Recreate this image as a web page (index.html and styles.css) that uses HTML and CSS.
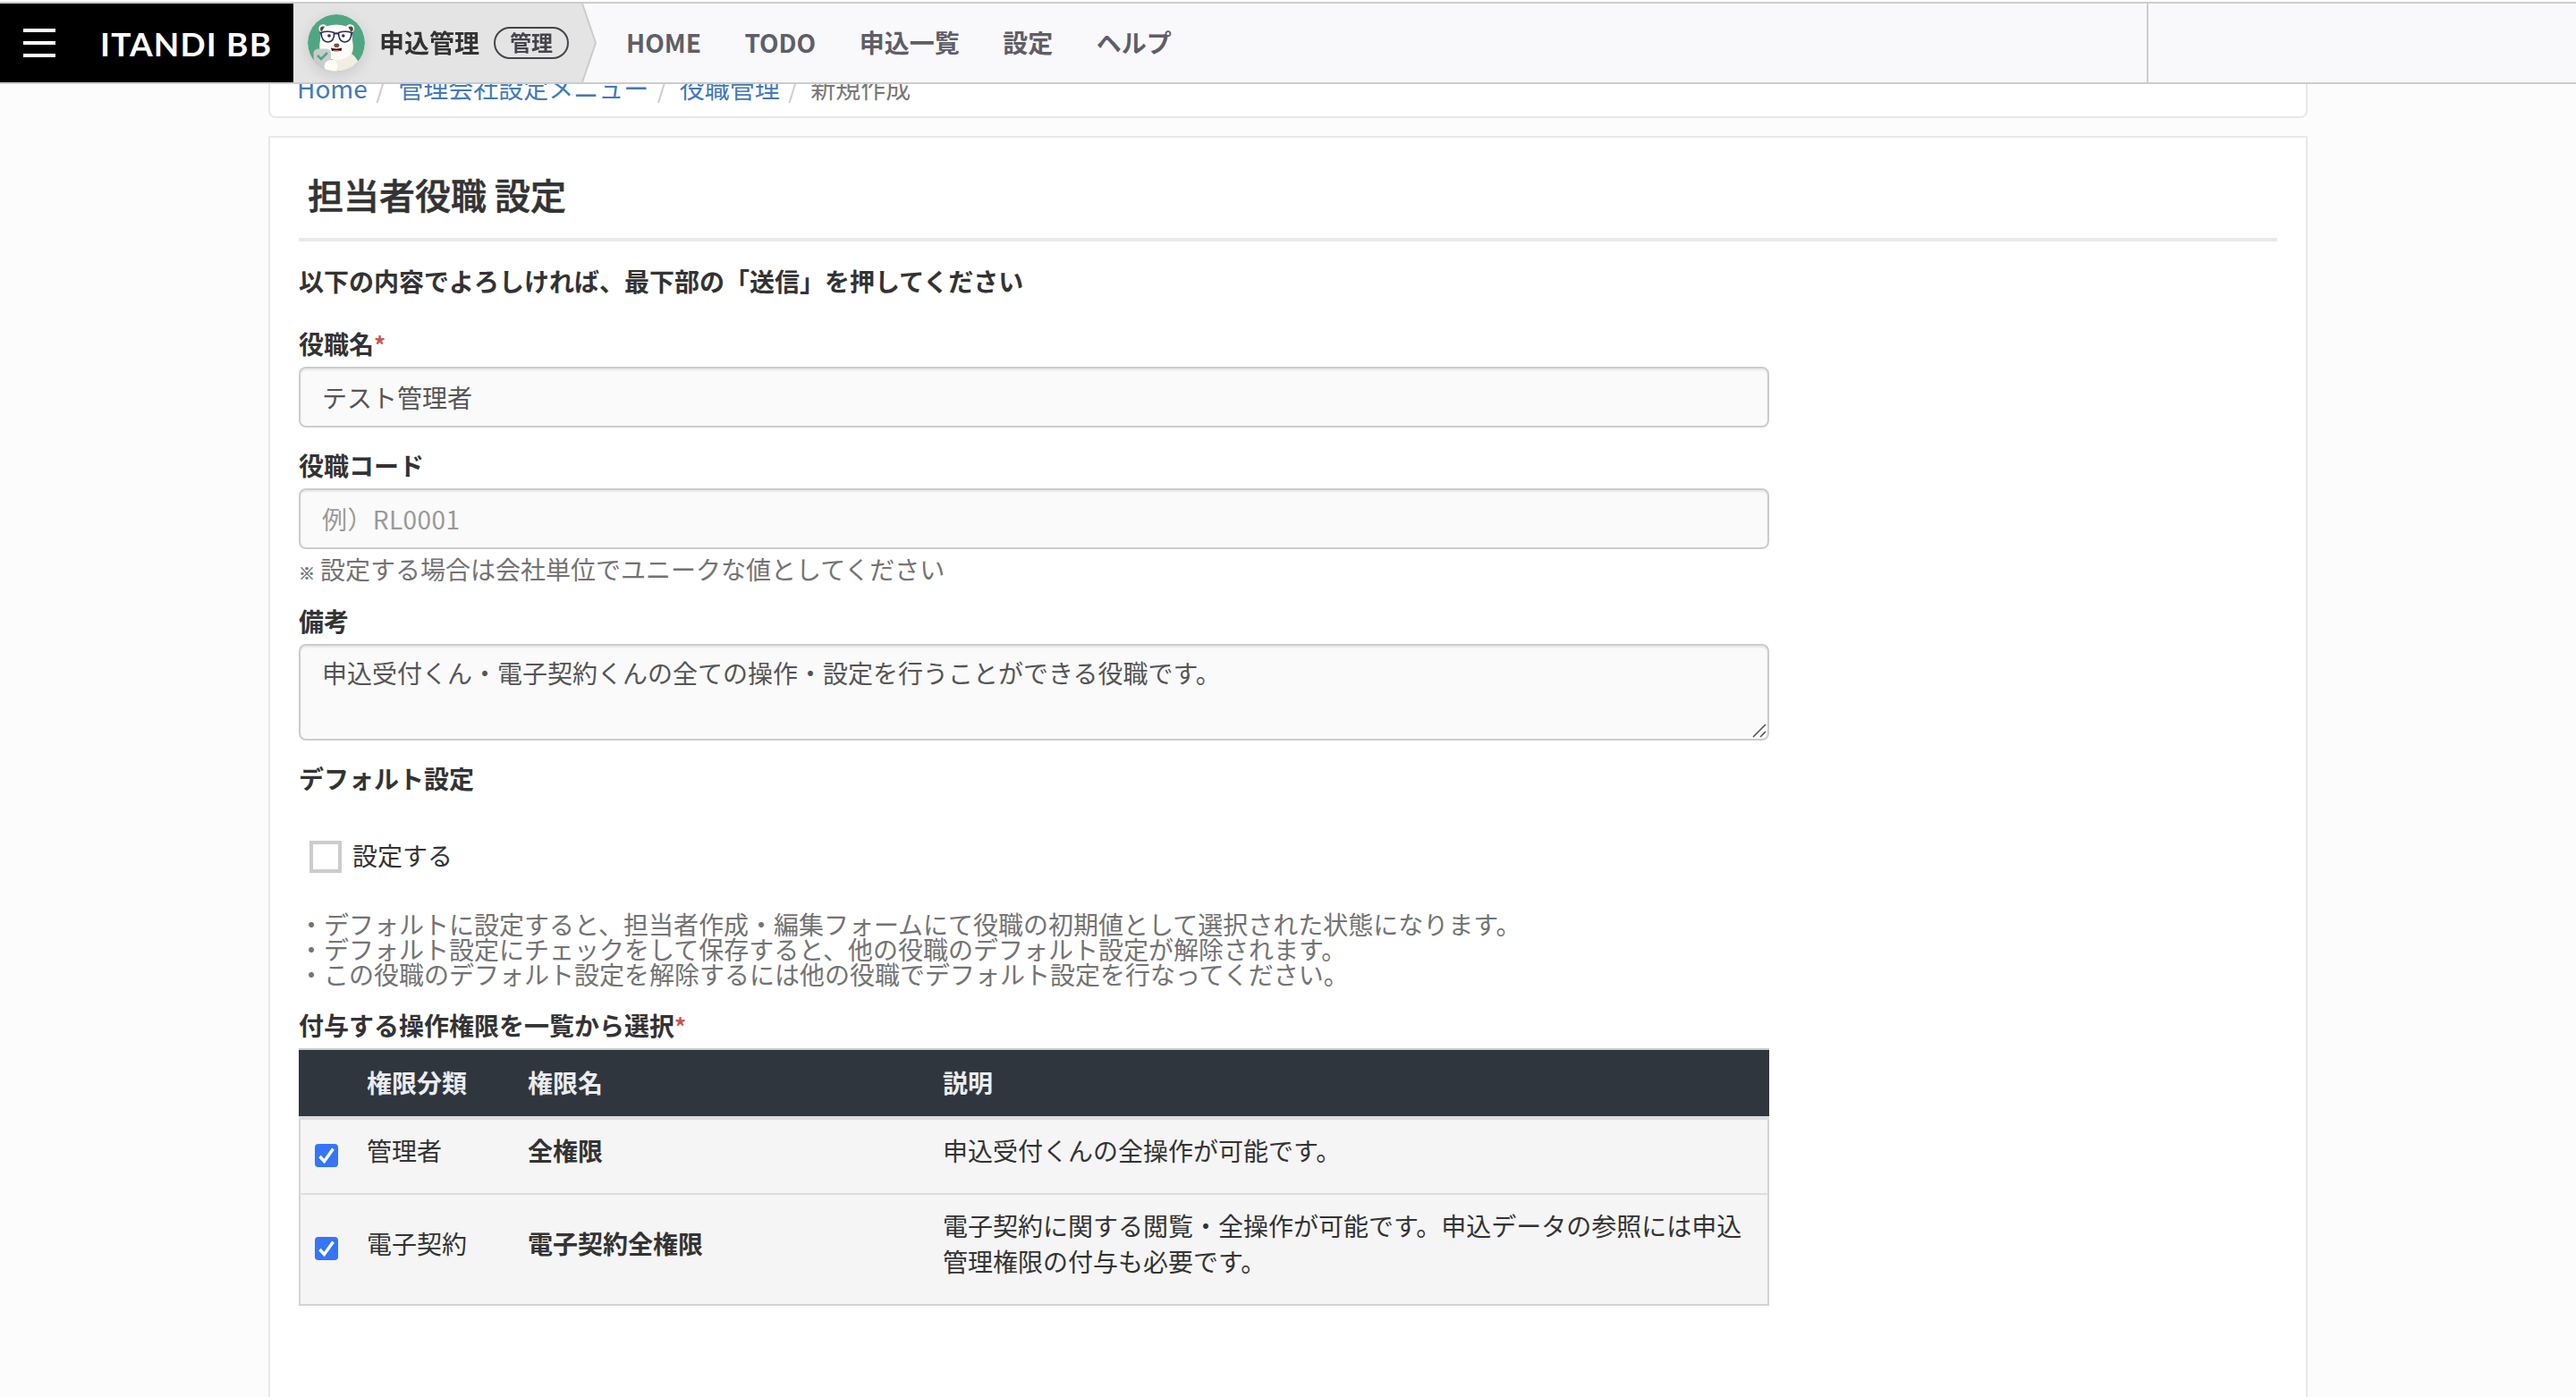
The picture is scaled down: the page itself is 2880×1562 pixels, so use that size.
FILE: index.html
```html
<!DOCTYPE html>
<html lang="ja">
<head>
  <meta charset="UTF-8">
  <meta name="viewport" content="width=device-width, initial-scale=1.0">
  <title>担当者役職 設定</title>
  <link rel="stylesheet" href="styles.css">
</head>
<body>
  <header class="navbar">
    <div class="brand">
      <div class="menu-button"><span></span><span></span><span></span></div>
      <svg class="logo" width="200" height="60" viewBox="0 0 200 60">
        <text x="0" y="44" textLength="191" lengthAdjust="spacing">ITANDI BB</text>
      </svg>
    </div>
    <div class="service">
      <svg class="avatar" width="64" height="64" viewBox="0 0 64 64">
        <defs><clipPath id="round"><circle cx="32" cy="32" r="32"/></clipPath></defs>
        <g clip-path="url(#round)">
          <rect width="64" height="64" fill="#50a683"/>
          <path d="M30 46 L49 44 Q57 49 60 64 L22 64 Z" fill="#f1ede0"/>
          <circle cx="17.2" cy="16" r="4.8" fill="#fffdf6"/>
          <circle cx="47.4" cy="16" r="4.8" fill="#fffdf6"/>
          <circle cx="17" cy="16.6" r="3" fill="#5a463e"/>
          <circle cx="47.8" cy="16.6" r="3" fill="#5a463e"/>
          <path d="M19 14 Q32 9 45 14 Q50 20 50 29 Q52 40 49 44 Q43 51 32 51 Q22 51 15 44 Q12 38 14 29 Q14 20 19 14 Z" fill="#fffdf6"/>
          <path d="M15 20.5 Q22 18 29.5 20.5 Q30 30.5 22.5 31 Q15.5 30.5 15 20.5 Z M34.5 20.5 Q42 18 49 20.5 Q48.5 30.5 41.5 31 Q34.5 30.5 34.5 20.5 Z" fill="#fff" stroke="#2a2560" stroke-width="1.6"/>
          <path d="M29.5 22 Q32 20.5 34.5 22 M15 21 L13.5 20.5 M49 21 L50.5 20.5" fill="none" stroke="#2a2560" stroke-width="1.8"/>
          <circle cx="24" cy="24" r="1.8" fill="#3a302c"/>
          <circle cx="39.8" cy="24" r="1.8" fill="#3a302c"/>
          <ellipse cx="32.3" cy="34.7" rx="3" ry="2.3" fill="#705446"/>
          <path d="M26 37.5 Q32 39.5 38.2 37.5 L37.5 41 L27 41 Z" fill="#211815"/>
          <path d="M28 40 L36.5 40 L35 41.4 L29 41.4 Z" fill="#e05c50"/>
          <path d="M7 64 L6.5 43 Q7 39 12 38.5 L21 38.5 Q26 39 26 44 L26 64 Z" fill="#c9cccc"/>
          <path d="M11 46 L15 50 L22 43" fill="none" stroke="#50a683" stroke-width="2.6"/>
          <ellipse cx="26" cy="58" rx="7.5" ry="7" fill="#fffdf6"/>
        </g>
      </svg>
      <span class="service-name">申込管理</span>
      <span class="pill">管理</span>
      <svg class="arrow" width="18" height="88" viewBox="0 0 18 88">
        <path d="M0 0 L1 0 L16 44 L1 88 L0 88 Z" fill="#e4e4e4"/>
        <path d="M1 0 L16 44 L1 88" fill="none" stroke="#ccc" stroke-width="2"/>
      </svg>
    </div>
    <nav class="nav">
      <a>HOME</a>
      <a>TODO</a>
      <a>申込一覧</a>
      <a>設定</a>
      <a>ヘルプ</a>
    </nav>
    <div class="account"></div>
  </header>

  <main class="container">
    <ol class="breadcrumb">
      <li><a>Home</a></li>
      <li><a>管理会社設定メニュー</a></li>
      <li><a>役職管理</a></li>
      <li>新規作成</li>
    </ol>

    <section class="card">
      <h1>担当者役職 設定</h1>
      <p class="lead">以下の内容でよろしければ、最下部の「送信」を押してください</p>

      <form class="form">
        <div class="field">
          <label>役職名<span class="required">*</span></label>
          <input class="control" type="text" value="テスト管理者">
        </div>
        <div class="field">
          <label>役職コード</label>
          <input class="control" type="text" placeholder="例）RL0001">
          <p class="help"><span class="mark">※</span>設定する場合は会社単位でユニークな値としてください</p>
        </div>
        <div class="field">
          <label>備考</label>
          <div class="textarea-wrap">
            <textarea class="control">申込受付くん・電子契約くんの全ての操作・設定を行うことができる役職です。</textarea>
            <svg class="resizer" width="16" height="16" viewBox="0 0 16 16">
              <path d="M1 15 L15 1 M9 15 L15 9" stroke="#555" stroke-width="1.6"/>
            </svg>
          </div>
        </div>
        <div class="field">
          <label>デフォルト設定</label>
          <div class="check"><span class="box"></span>設定する</div>
          <p class="notes">
            ・デフォルトに設定すると、担当者作成・編集フォームにて役職の初期値として選択された状態になります。<br>
            ・デフォルト設定にチェックをして保存すると、他の役職のデフォルト設定が解除されます。<br>
            ・この役職のデフォルト設定を解除するには他の役職でデフォルト設定を行なってください。
          </p>
        </div>
        <div class="field">
          <label>付与する操作権限を一覧から選択<span class="required">*</span></label>
          <table class="roles">
            <colgroup><col class="col-check"><col class="col-type"><col class="col-name"><col></colgroup>
            <thead>
              <tr><th></th><th>権限分類</th><th>権限名</th><th>説明</th></tr>
            </thead>
            <tbody>
              <tr class="row-short">
                <td><svg class="tick" width="26" height="26" viewBox="0 0 26 26"><rect width="26" height="26" rx="4" fill="#3575f6"/><path d="M5.5 14 L10.5 19.5 L20.5 5.5" fill="none" stroke="#fff" stroke-width="3.4"/></svg></td>
                <td>管理者</td>
                <td class="name">全権限</td>
                <td>申込受付くんの全操作が可能です。</td>
              </tr>
              <tr class="row-tall">
                <td><svg class="tick" width="26" height="26" viewBox="0 0 26 26"><rect width="26" height="26" rx="4" fill="#3575f6"/><path d="M5.5 14 L10.5 19.5 L20.5 5.5" fill="none" stroke="#fff" stroke-width="3.4"/></svg></td>
                <td>電子契約</td>
                <td class="name">電子契約全権限</td>
                <td>電子契約に関する閲覧・全操作が可能です。申込データの参照には申込管理権限の付与も必要です。</td>
              </tr>
            </tbody>
          </table>
        </div>
      </form>
    </section>
  </main>
</body>
</html>
```
FILE: styles.css
```css
* {
  box-sizing: border-box;
}
body {
  margin: 0;
  background-color: #fcfcfc;
  color: #333;
  font-family: "Noto Sans CJK JP", "Noto Sans", sans-serif;
  font-size: 28px;
  line-height: 40px;
}
h1, p, ol {
  margin: 0;
}

/* navbar */
.navbar {
  position: fixed;
  z-index: 10;
  top: 0;
  left: 0;
  width: 100%;
  height: 94px;
  display: flex;
  border-top: 2px solid #fff;
  border-bottom: 2px solid #ccc;
  background-color: #f9f9fc;
  box-shadow: inset 0 2px 0 #ccc;
  padding-top: 2px;
}
.brand {
  width: 328px;
  display: flex;
  align-items: center;
  background-color: #000;
}
.menu-button {
  width: 36px;
  margin: 0 50px 0 26px;
  display: flex;
  flex-direction: column;
  gap: 10px;
}
.menu-button span {
  height: 4px;
  background-color: #fff;
}
.logo {
  margin-top: 2px;
  fill: #fff;
  font-family: Lato, sans-serif;
  font-weight: 700;
  font-size: 37px;
}
.service {
  width: 340px;
  display: flex;
  align-items: center;
  background: linear-gradient(#e4e4e4, #e4e4e4) no-repeat;
  background-size: 323px 100%;
  padding-left: 16px;
}
.avatar {
  border-radius: 50%;
  box-shadow: 0 4px 16px rgba(0, 0, 0, .12);
}
.service-name {
  margin: -3px 16px 0 16px;
  font-weight: 700;
}
.pill {
  width: 84px;
  height: 36px;
  border: 2px solid #45434c;
  border-radius: 18px;
  color: #45434c;
  font-size: 24px;
  font-weight: 700;
  line-height: 29px;
  text-align: center;
}
.arrow {
  margin-left: 14px;
}
.nav {
  flex: 1;
  display: flex;
  align-items: center;
  gap: 48.5px;
  padding: 0 0 3px 32px;
  color: #5f5e66;
  font-weight: 700;
}
.account {
  width: 480px;
  border-left: 2px solid #ccc;
}

/* page */
.container {
  width: 2280px;
  margin: 0 auto;
  padding-top: 64px;
}
.breadcrumb {
  display: flex;
  list-style: none;
  padding: 12px 30px;
  border: 2px solid #e7e7ed;
  border-radius: 8px;
  background-color: #fff;
  color: #777;
  height: 68px;
}
.breadcrumb a {
  color: #4279b9;
}
.breadcrumb li + li::before {
  content: "/";
  color: #ccc;
  padding: 0 14px 0 9.5px;
}
.card {
  height: 1410px;
  margin-top: 20px;
  padding: 33px 32px 0;
  border: 2px solid #e7e7ed;
  border-bottom: 0;
  background-color: #fff;
}
h1 {
  height: 83px;
  padding-left: 10px;
  border-bottom: 4px solid #e8e8ed;
  font-size: 40px;
  line-height: 60px;
  font-weight: 500;
  -webkit-text-stroke: .6px #333;
}
.lead {
  margin-top: 24px;
  font-weight: 700;
}

/* form */
.form {
  width: 1644px;
  margin-top: 30px;
}
.field {
  margin-bottom: 22px;
}
.field label {
  display: block;
  height: 40px;
  margin-bottom: 6px;
  font-weight: 700;
}
.required {
  color: #c9554f;
  font-size: 26px;
}
.control {
  display: block;
  width: 100%;
  height: 68px;
  padding: 11px 24px;
  border: 2px solid #ccc;
  border-radius: 8px;
  background-color: #fafafa;
  box-shadow: inset 0 2px 2px rgba(0, 0, 0, .075);
  color: #555;
  font: inherit;
}
.control::placeholder {
  color: #999;
  letter-spacing: .4px;
}
.textarea-wrap {
  position: relative;
}
textarea.control {
  height: 108px;
  padding-top: 10px;
  resize: none;
  overflow: hidden;
}
.resizer {
  position: absolute;
  right: 3px;
  bottom: 3px;
}
.help {
  height: 40px;
  margin: 2px 0 -4px;
  color: #737373;
}
.mark {
  display: inline-block;
  width: 24px;
  font-size: 18px;
  font-weight: 700;
  line-height: 1;
  -webkit-text-stroke: .6px #737373;
}
.check {
  display: flex;
  align-items: center;
  height: 36px;
  margin-top: 50px;
  padding: 0 0 4px 12px;
}
.box {
  width: 36px;
  height: 36px;
  margin: 4px 12px 0 0;
  border: 4px solid #ccc;
  background-color: #fff;
}
.notes {
  margin: 43px 0 23px;
  color: #737373;
  line-height: 28px;
}

/* roles table */
.roles {
  width: 100%;
  table-layout: fixed;
  border-collapse: separate;
  border-spacing: 0;
  border-top: 2px solid #ccc;
}
.col-check {
  width: 60px;
}
.col-type {
  width: 180px;
}
.col-name {
  width: 464px;
}
.roles th {
  height: 78px;
  padding: 0 16px 2px;
  border-bottom: 4px solid #ddd;
  background-color: #30363e;
  color: #e9ecef;
  text-align: left;
}
.roles td {
  padding: 0 16px 15px;
  border-bottom: 2px solid #ddd;
  background-color: #f5f5f5;
  vertical-align: middle;
}
.roles td:first-child {
  border-left: 2px solid #d3d3d3;
}
.roles td:last-child {
  padding-right: 14px;
  border-right: 2px solid #d3d3d3;
}
.row-short td {
  height: 84px;
}
.row-tall td {
  height: 124px;
  border-bottom-color: #d3d3d3;
}
.roles .name {
  font-weight: 700;
}
.tick {
  display: block;
  margin-top: 13px;
}
```
